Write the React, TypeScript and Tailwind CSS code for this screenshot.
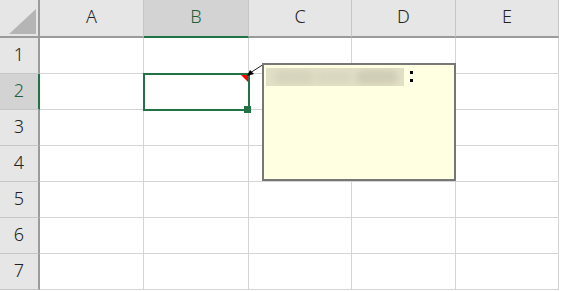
const cols = [
  { label: 'A', w: 'w-[104px]' },
  { label: 'B', w: 'w-[105px]' },
  { label: 'C', w: 'w-[103px]' },
  { label: 'D', w: 'w-[104px]' },
  { label: 'E', w: 'w-[103px]' },
];
const rows = [1, 2, 3, 4, 5, 6, 7];

export default function App() {
  return (
    <div className="relative h-[291px] w-[561px] overflow-hidden bg-white font-['Noto_Sans','Noto_Sans_CJK_JP',sans-serif] text-[18px] font-light text-[#222]">
      {/* header row */}
      <div className="flex h-[38px]">
        <div className="relative h-[38px] w-[40px] border-b-2 border-r-2 border-[#9b9b9b] bg-[#e6e6e6]">
          <svg className="absolute left-0 top-0" width="40" height="36">
            <polygon points="9,34 36,9 36,34" fill="#b5b5b5" />
          </svg>
        </div>
        {cols.map((c) =>
          c.label === 'B' ? (
            <div
              key={c.label}
              className={`${c.w} flex h-[38px] items-center justify-center border-b-2 border-r border-b-[#217346] border-r-[#c6c6c6] bg-[#d3d3d3] pb-[3px] text-[#1f5e3a]`}
            >
              {c.label}
            </div>
          ) : (
            <div
              key={c.label}
              className={`${c.w} flex h-[38px] items-center justify-center border-b-2 border-r border-b-[#9b9b9b] border-r-[#c6c6c6] bg-[#e6e6e6] pb-[3px]`}
            >
              {c.label}
            </div>
          ),
        )}
      </div>

      {/* body rows */}
      {rows.map((r) => (
        <div key={r} className="flex h-[36px]">
          {r === 2 ? (
            <div className="flex h-[36px] w-[40px] items-center justify-center border-b border-r-2 border-b-[#c6c6c6] border-r-[#217346] bg-[#d3d3d3] pb-[2px] text-[#1f5e3a]">
              {r}
            </div>
          ) : (
            <div className="flex h-[36px] w-[40px] items-center justify-center border-b border-r-2 border-b-[#c6c6c6] border-r-[#9b9b9b] bg-[#e6e6e6] pb-[2px]">
              {r}
            </div>
          )}
          {cols.map((c) => (
            <div key={c.label} className={`${c.w} h-[36px] border-b border-r border-[#d4d4d4]`} />
          ))}
        </div>
      ))}

      {/* selected cell B2 */}
      <div className="absolute left-[143px] top-[73px] h-[38px] w-[107px] border-2 border-[#217346]" />
      <div className="absolute left-[244px] top-[106px] h-[7px] w-[7px] bg-[#217346]" />
      <svg className="absolute left-[240px] top-[74px]" width="9" height="9">
        <polygon points="1,1 8,1 8,8" fill="#ff0000" />
      </svg>

      {/* comment pointer */}
      <svg className="absolute left-[244px] top-[60px]" width="24" height="20">
        <line x1="20" y1="4" x2="6" y2="13" stroke="#222" strokeWidth="1" />
        <polygon points="3,16 10,14 6,10" fill="#000" />
      </svg>

      {/* comment box */}
      <div className="absolute left-[262px] top-[63px] h-[118px] w-[194px] border-2 border-[#777] bg-[#ffffe1] px-[2px] pt-[3px]">
        <div className="flex items-start gap-[6px]">
          <div className="relative h-[18px] w-[138px] overflow-hidden bg-[#e2e0c6]">
            <div className="absolute left-[8px] top-[2px] h-[14px] w-[40px] rounded-full bg-[#d6d4bc] blur-[3px]" />
            <div className="absolute left-[50px] top-[3px] h-[12px] w-[36px] rounded-full bg-[#d9d7bf] blur-[3px]" />
            <div className="absolute left-[90px] top-[2px] h-[14px] w-[42px] rounded-full bg-[#cfcdb5] blur-[3px]" />
          </div>
          <div className="mt-[3px] flex flex-col gap-[5px]">
            <div className="h-[3px] w-[3px] bg-black" />
            <div className="h-[3px] w-[3px] bg-black" />
          </div>
        </div>
      </div>
    </div>
  );
}
